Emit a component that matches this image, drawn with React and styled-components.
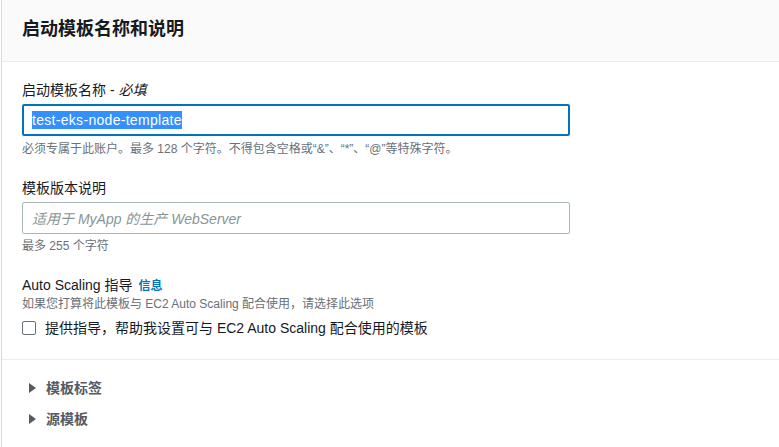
import styled, { createGlobalStyle } from "styled-components";

const GlobalStyle = createGlobalStyle`
  html, body {
    margin: 0;
    padding: 0;
    background: #ffffff;
  }
  body {
    font-family: "Liberation Sans", "Noto Sans CJK SC", sans-serif;
    color: #16191f;
  }
`;

const Panel = styled.div`
  margin-left: 1px;
  border-left: 1px solid #d5dbdb;
  background: #ffffff;
  min-height: 447px;
`;

const Header = styled.div`
  background: #fafafa;
  border-bottom: 1px solid #eaeded;
  padding: 17px 20px 20px;
`;

const Title = styled.h2`
  margin: 0;
  font-size: 18px;
  line-height: 24px;
  font-weight: 700;
  color: #16191f;
`;

const Body = styled.div`
  padding: 18px 20px 21px;
  border-bottom: 1px solid #eaeded;
  display: flex;
  flex-direction: column;
  gap: 21px;
`;

const Field = styled.div`
  display: flex;
  flex-direction: column;
  width: 548px;
`;

const Label = styled.label`
  font-size: 14px;
  line-height: 20px;
  color: #16191f;
  margin-bottom: ${(p) => (p.$tight ? "0" : "4px")};

  em {
    font-style: italic;
  }
`;

const InfoLink = styled.a`
  font-size: 12px;
  font-weight: 700;
  color: #0073bb;
  margin-left: 6px;
  text-decoration: none;
`;

const TextBox = styled.div`
  box-sizing: border-box;
  height: 32px;
  display: flex;
  align-items: center;
  border-radius: 2px;
  font-size: 14px;
  border: ${(p) => (p.$focused ? "2px solid #0073bb" : "1px solid #aab7b8")};
  padding: 0 ${(p) => (p.$focused ? "8px" : "9px")};
  color: #16191f;
`;

const Selected = styled.span`
  background: #3390ff;
  color: #ffffff;
  line-height: 18px;
  letter-spacing: 0.3px;
`;

const Placeholder = styled.span`
  font-style: italic;
  color: #879596;
`;

const Hint = styled.div`
  font-size: 12px;
  line-height: 16px;
  color: #687078;
  margin-top: ${(p) => (p.$top ? p.$top : "5px")};
`;

const CheckRow = styled.label`
  display: flex;
  align-items: center;
  gap: 9px;
  margin-top: 6px;
  font-size: 14px;
  line-height: 20px;
  color: #16191f;
`;

const CheckBox = styled.span`
  box-sizing: border-box;
  width: 14px;
  height: 14px;
  border: 1px solid #687078;
  border-radius: 2px;
  background: #fff;
`;

const Expanders = styled.div`
  padding: 18px 20px;
  display: flex;
  flex-direction: column;
  gap: 11px;
`;

const Expander = styled.div`
  display: flex;
  align-items: center;
  gap: 10px;
  padding-left: 7px;
  font-size: 14px;
  line-height: 20px;
  font-weight: 700;
  color: #545b64;
`;

const Caret = styled.span`
  width: 0;
  height: 0;
  border-top: 5px solid transparent;
  border-bottom: 5px solid transparent;
  border-left: 7px solid #545b64;
`;

export default function App() {
  return (
    <>
      <GlobalStyle />
      <Panel>
        <Header>
          <Title>启动模板名称和说明</Title>
        </Header>
        <Body>
          <Field>
            <Label>
              启动模板名称 - <em>必填</em>
            </Label>
            <TextBox $focused role="textbox">
              <Selected>test-eks-node-template</Selected>
            </TextBox>
            <Hint>必须专属于此账户。最多 128 个字符。不得包含空格或“&”、“*”、“@”等特殊字符。</Hint>
          </Field>
          <Field>
            <Label>模板版本说明</Label>
            <TextBox role="textbox">
              <Placeholder>适用于 MyApp 的生产 WebServer</Placeholder>
            </TextBox>
            <Hint $top="4px">最多 255 个字符</Hint>
          </Field>
          <Field>
            <Label $tight>
              Auto Scaling 指导<InfoLink href="#">信息</InfoLink>
            </Label>
            <Hint $top="0">如果您打算将此模板与 EC2 Auto Scaling 配合使用，请选择此选项</Hint>
            <CheckRow>
              <CheckBox />
              提供指导，帮助我设置可与 EC2 Auto Scaling 配合使用的模板
            </CheckRow>
          </Field>
        </Body>
        <Expanders>
          <Expander>
            <Caret />
            模板标签
          </Expander>
          <Expander>
            <Caret />
            源模板
          </Expander>
        </Expanders>
      </Panel>
    </>
  );
}
